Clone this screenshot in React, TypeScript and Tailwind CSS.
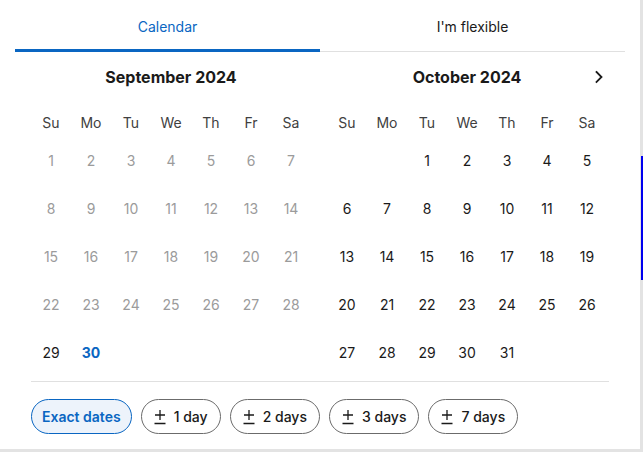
import React from "react";

const DOW = ["Su", "Mo", "Tu", "We", "Th", "Fr", "Sa"];

type Cell = { n: number | null; cls: string };

function sept(): Cell[] {
  const cells: Cell[] = [];
  for (let d = 1; d <= 30; d++) {
    let cls = "text-[#9b9b9b]";
    if (d === 29) cls = "text-[#1a1a1a]";
    if (d === 30) cls = "text-[#0a66c2] font-bold";
    cells.push({ n: d, cls });
  }
  return cells;
}

function oct(): Cell[] {
  const cells: Cell[] = [{ n: null, cls: "" }, { n: null, cls: "" }];
  for (let d = 1; d <= 31; d++) cells.push({ n: d, cls: "text-[#1a1a1a]" });
  return cells;
}

function Month({ title, cells, chevron }: { title: string; cells: Cell[]; chevron?: boolean }) {
  return (
    <div className="w-[280px] flex flex-col">
      <div className="relative h-[50px] flex items-center justify-center">
        <span className="text-[16px] font-bold text-[#1a1a1a]">{title}</span>
        {chevron && (
          <svg className="absolute right-[0px] top-[17px]" width="16" height="16" viewBox="0 0 16 16" fill="none">
            <path d="M5.5 3 L10.5 8 L5.5 13" stroke="#1a1a1a" strokeWidth="1.8" strokeLinecap="square" />
          </svg>
        )}
      </div>
      <div className="mt-[6px] grid grid-cols-7 h-[28px] items-center">
        {DOW.map((d) => (
          <div key={d} className="text-center text-[14px] text-[#404040]">{d}</div>
        ))}
      </div>
      <div className="grid grid-cols-7 auto-rows-[48px]">
        {cells.map((c, i) => (
          <div key={i} className={`flex items-center justify-center text-[14px] ${c.cls}`}>
            {c.n ?? ""}
          </div>
        ))}
      </div>
    </div>
  );
}

function PlusMinus() {
  return (
    <svg width="12" height="16" viewBox="0 0 12 16" fill="none">
      <path d="M6 1 V11 M1 6 H11 M0.5 14.5 H11.5" stroke="#1a1a1a" strokeWidth="1.3" />
    </svg>
  );
}

function Chip({ label }: { label: string }) {
  return (
    <button className="h-[35px] rounded-full border border-[#6b6b6b] bg-white px-[12px] flex items-center gap-[8px] text-[14px] font-medium text-[#1a1a1a]">
      <PlusMinus />
      <span>{label}</span>
    </button>
  );
}

export default function App() {
  return (
    <div className="relative w-[643px] h-[452px] bg-[#e3e3e3]" style={{ fontFamily: "Inter, 'Noto Sans', sans-serif" }}>
      <div className="w-[640px] h-[449px] bg-white">
        <div className="px-[15px]">
          <div className="flex h-[52px] border-b border-[#e0e0e0]">
            <div className="flex-1 relative flex items-center justify-center pt-[2px] text-[14px] text-[#0a66c2]">
              Calendar
              <div className="absolute left-0 right-0 bottom-[-1px] h-[3px] bg-[#0a66c2]" />
            </div>
            <div className="flex-1 flex items-center justify-center pt-[2px] text-[14px] text-[#1a1a1a]">I'm flexible</div>
          </div>
        </div>
        <div className="px-[31px]">
          <div className="flex gap-[16px]">
            <Month title="September 2024" cells={sept()} />
            <Month title="October 2024" cells={oct()} chevron />
          </div>
          <div className="mt-[5px] w-[578px] border-t border-[#e0e0e0]" />
          <div className="pt-[17px] flex gap-[9px]">
            <button className="h-[35px] rounded-full border border-[#0a66c2] bg-[#edf3fb] px-[10px] text-[14px] font-semibold text-[#0a66c2]">
              Exact dates
            </button>
            <Chip label="1 day" />
            <Chip label="2 days" />
            <Chip label="3 days" />
            <Chip label="7 days" />
          </div>
        </div>
      </div>
      <div className="absolute left-[641px] top-[156px] w-[2px] h-[124px] bg-[#0000ee]" />
    </div>
  );
}
